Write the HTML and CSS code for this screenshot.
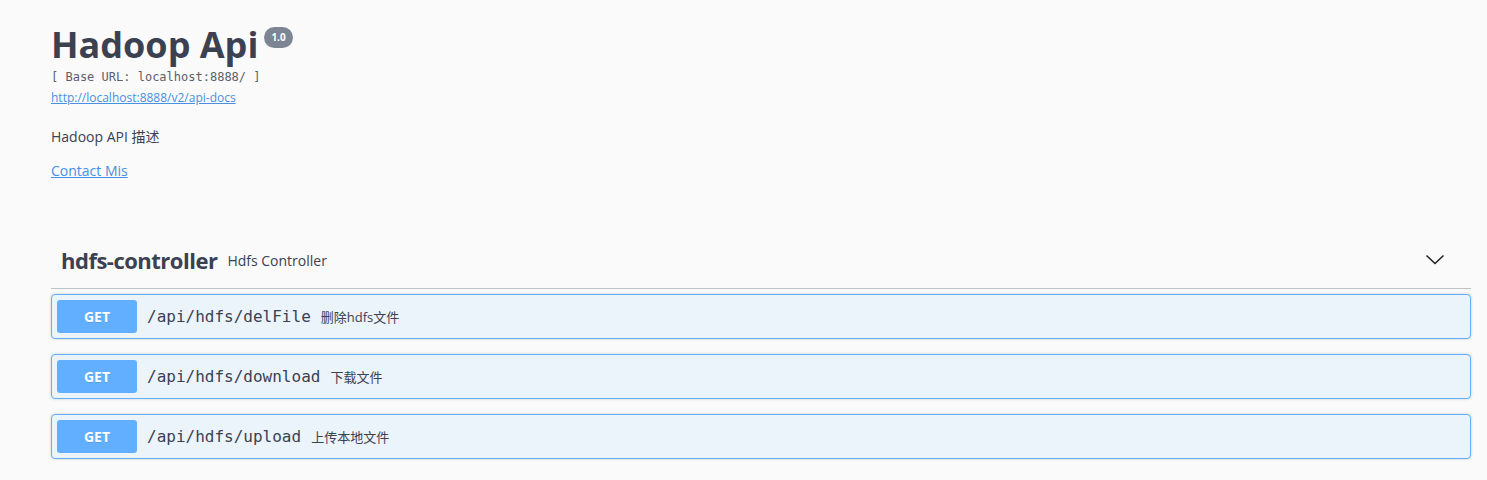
FILE: index.html
```html
<!DOCTYPE html>
<html>
<head>
  <meta charset="utf-8">
  <title>Swagger UI</title>
  <link rel="stylesheet" href="styles.css">
</head>
<body>
  <div class="wrapper">
    <div class="info">
      <h2 class="title">Hadoop Api <span class="version">1.0</span></h2>
      <pre class="base-url">[ Base URL: localhost:8888/ ]</pre>
      <a class="doc-link" href="#">http://localhost:8888/v2/api-docs</a>
      <p class="description">Hadoop API 描述</p>
      <a class="contact" href="#">Contact Mis</a>
    </div>

    <div class="tag-section">
      <h4 class="tag">
        <span class="tag-name">hdfs-controller</span>
        <small class="tag-desc">Hdfs Controller</small>
        <svg class="arrow" width="20" height="20" viewBox="0 0 20 20">
          <path d="M1.5 5.5 L10 13.5 L18.5 5.5" fill="none" stroke="#222" stroke-width="1.6"/>
        </svg>
      </h4>

      <div class="opblock">
        <span class="method">GET</span>
        <span class="path">/api/hdfs/delFile</span>
        <span class="summary">删除hdfs文件</span>
      </div>
      <div class="opblock">
        <span class="method">GET</span>
        <span class="path">/api/hdfs/download</span>
        <span class="summary">下载文件</span>
      </div>
      <div class="opblock">
        <span class="method">GET</span>
        <span class="path">/api/hdfs/upload</span>
        <span class="summary">上传本地文件</span>
      </div>
    </div>
  </div>
</body>
</html>
```

FILE: styles.css
```css
html, body { margin: 0; padding: 0; }
body {
  background: #fafafa;
  font-family: "Open Sans", "Noto Sans CJK SC", sans-serif;
  color: #3b4151;
}

.wrapper { padding: 0 16px 0 51px; }

.info { padding-top: 21px; }
.title {
  margin: 0;
  font-size: 36px;
  font-weight: 700;
  line-height: 48px;
  color: #3b4151;
  display: flex;
  align-items: flex-start;
}
.version {
  margin: 6px 0 0 6px;
  background: #7d8492;
  color: #fff;
  font-size: 10px;
  font-weight: 700;
  line-height: 13px;
  padding: 4px 7px;
  border-radius: 57px;
}
.base-url {
  margin: 0;
  font-family: "DejaVu Sans Mono", monospace;
  font-size: 12px;
  line-height: 16px;
  color: #5a5f6b;
}
.doc-link {
  display: inline-block;
  margin-top: 2px;
  font-size: 12px;
  color: #4990e2;
}
.description {
  margin: 18px 0 0;
  font-size: 14px;
  line-height: 24px;
}
.contact {
  display: inline-block;
  margin-top: 12px;
  font-size: 14px;
  color: #4990e2;
}

.tag-section { margin-top: 54px; }
.tag {
  margin: 0 0 5px;
  display: flex;
  align-items: center;
  padding: 11px 26px 14px 10px;
  border-bottom: 1px solid rgba(59, 65, 81, .3);
  height: 28px;
}
.tag-name {
  font-size: 22px;
  font-weight: 700;
  letter-spacing: -0.5px;
}
.tag-desc {
  margin-left: 10px;
  font-size: 14px;
  font-weight: 400;
}
.arrow { margin-left: auto; }

.opblock {
  display: flex;
  align-items: center;
  height: 43px;
  padding: 0 5px;
  margin-bottom: 15px;
  border: 1px solid #61affe;
  border-radius: 4px;
  background: #ebf3fb;
  box-shadow: 0 0 3px rgba(0, 0, 0, .19);
}
.method {
  width: 80px;
  height: 33px;
  line-height: 33px;
  text-align: center;
  background: #61affe;
  color: #fff;
  border-radius: 3px;
  font-size: 14px;
  font-weight: 700;
  text-shadow: 0 1px 0 rgba(0, 0, 0, .1);
}
.path {
  margin-left: 10px;
  font-family: "DejaVu Sans Mono", monospace;
  font-size: 16px;
  color: #3b4151;
}
.summary {
  margin-left: 10px;
  font-size: 13px;
  color: #3b4151;
}
```
